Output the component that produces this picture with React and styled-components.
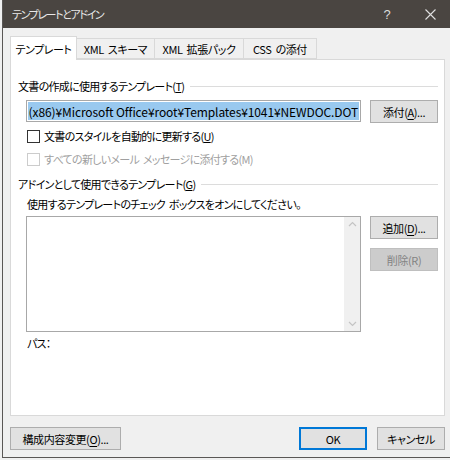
import React from "react";
import styled, { createGlobalStyle } from "styled-components";

const GlobalStyle = createGlobalStyle`
  html, body {
    margin: 0;
    padding: 0;
    background: #f0f0f0;
  }
  body {
    font-family: "Noto Sans CJK JP", "Noto Sans", sans-serif;
    font-size: 11px;
    letter-spacing: -0.7px;
    word-spacing: 2px;
    font-feature-settings: "palt";
    color: #000;
  }
`;

const Window = styled.div`
  margin-left: 2px;
  width: 448px;
  height: 458px;
  border-left: 1px solid #5a5755;
  border-bottom: 1px solid #5a5755;
  background: #f0f0f0;
  display: flex;
  flex-direction: column;
  box-sizing: border-box;
`;

const TitleBar = styled.div`
  height: 28px;
  flex-shrink: 0;
  background: #4a4541;
  color: #e8e8e8;
  display: flex;
  align-items: center;
  padding-left: 9px;
`;

const TitleText = styled.div`
  flex: 1;
  letter-spacing: -1.4px;
`;

const TitleIcon = styled.div`
  width: ${(p) => p.$w}px;
  display: flex;
  justify-content: center;
  align-items: center;
  font-size: 13px;
  letter-spacing: 0;
  color: #dcdcdc;
  font-family: "Liberation Sans", sans-serif;
`;

const Body = styled.div`
  flex: 1;
  display: flex;
  flex-direction: column;
  padding: 8px 5px 0 7px;
`;

const TabList = styled.div`
  display: flex;
  align-items: flex-end;
  height: 23px;
  position: relative;
  z-index: 1;
`;

const Tab = styled.div`
  width: ${(p) => p.$w}px;
  height: ${(p) => (p.$active ? "24px" : "21px")};
  box-sizing: border-box;
  margin-bottom: ${(p) => (p.$active ? "-1px" : "0")};
  background: ${(p) => (p.$active ? "#fff" : "#f0f0f0")};
  border: 1px solid #d9d9d9;
  border-bottom: ${(p) => (p.$active ? "none" : "1px solid #d9d9d9")};
  border-left: ${(p) => (p.$first || p.$active ? "1px solid #d9d9d9" : "none")};
  display: flex;
  align-items: center;
  justify-content: center;
  white-space: nowrap;
  letter-spacing: -0.4px;
`;

const Panel = styled.div`
  height: 357px;
  box-sizing: border-box;
  background: #fff;
  border: 1px solid #d9d9d9;
  padding: 18px 6px 0 7px;
  display: flex;
  flex-direction: column;
`;

const GroupHeader = styled.div`
  display: flex;
  align-items: center;
  gap: 6px;
  height: 16px;
  margin-top: ${(p) => p.$mt || 0}px;
  white-space: nowrap;
  &::after {
    content: "";
    flex: 1;
    height: 1px;
    background: #dcdcdc;
  }
`;

const Row = styled.div`
  display: flex;
  gap: 9px;
  margin-left: 8px;
  margin-top: ${(p) => p.$mt || 0}px;
  align-items: flex-start;
`;

const TextField = styled.div`
  width: 335px;
  height: 22px;
  box-sizing: border-box;
  border: 1px solid #a8a8a8;
  padding: 1px;
  display: flex;
  overflow: hidden;
`;

const Selection = styled.div`
  flex: 1;
  background: #99c9ef;
  display: flex;
  align-items: center;
  justify-content: flex-end;
  padding-right: 1px;
  white-space: nowrap;
  overflow: hidden;
  font-size: 12px;
  letter-spacing: -0.1px;
  word-spacing: 0;
`;

const Button = styled.button`
  width: ${(p) => p.$w || 68}px;
  height: 23px;
  box-sizing: border-box;
  font: inherit;
  letter-spacing: -0.4px;
  font-feature-settings: "palt";
  padding: 0;
  background: ${(p) => (p.disabled ? "#cccccc" : "#e1e1e1")};
  color: ${(p) => (p.disabled ? "#838383" : "#000")};
  border: ${(p) => (p.$default ? "2px solid #0078d7" : p.disabled ? "1px solid #bfbfbf" : "1px solid #adadad")};
  display: flex;
  align-items: center;
  justify-content: center;
  u {
    text-underline-offset: 2px;
  }
`;

const CheckRow = styled.label`
  display: flex;
  align-items: center;
  gap: 4px;
  height: 16px;
  margin-left: 9px;
  margin-top: ${(p) => p.$mt || 0}px;
  color: ${(p) => (p.$disabled ? "#a0a0a0" : "#000")};
  white-space: nowrap;
`;

const Box = styled.span`
  width: 13px;
  height: 13px;
  box-sizing: border-box;
  border: 1px solid ${(p) => (p.$disabled ? "#cccccc" : "#333")};
  background: #fff;
  flex-shrink: 0;
`;

const Note = styled.div`
  margin-left: 9px;
  margin-top: ${(p) => p.$mt || 0}px;
  height: 16px;
  display: flex;
  align-items: center;
  white-space: pre;
`;

const ListBox = styled.div`
  width: 335px;
  height: 116px;
  box-sizing: border-box;
  border: 1px solid #a8a8a8;
  display: flex;
  justify-content: flex-end;
`;

const ScrollBar = styled.div`
  width: 16px;
  background: #f0f0f0;
  display: flex;
  flex-direction: column;
  justify-content: space-between;
  align-items: center;
  padding: 4px 0;
`;

const ButtonColumn = styled.div`
  display: flex;
  flex-direction: column;
  gap: 9px;
`;

const Footer = styled.div`
  display: flex;
  align-items: center;
  margin-top: 11px;
  gap: 10px;
`;

const Spacer = styled.div`
  flex: 1;
`;

const Chevron = ({ up }) => (
  <svg width="9" height="6" viewBox="0 0 9 6">
    <polyline
      points={up ? "1,5 4.5,1.5 8,5" : "1,1 4.5,4.5 8,1"}
      fill="none"
      stroke="#c4c4c4"
      strokeWidth="1.2"
    />
  </svg>
);

export default function App() {
  return (
    <>
      <GlobalStyle />
      <Window>
        <TitleBar>
          <TitleText>テンプレートとアドイン</TitleText>
          <TitleIcon $w={46}>?</TitleIcon>
          <TitleIcon $w={40}>
            <svg width="11" height="11" viewBox="0 0 11 11">
              <path d="M0.5 0.5 L10.5 10.5 M10.5 0.5 L0.5 10.5" stroke="#e0e0e0" strokeWidth="1.1" />
            </svg>
          </TitleIcon>
        </TitleBar>
        <Body>
          <TabList>
            <Tab $active $first $w={67}>テンプレート</Tab>
            <Tab $w={78}>XML スキーマ</Tab>
            <Tab $w={89}>XML 拡張パック</Tab>
            <Tab $w={73}>CSS の添付</Tab>
          </TabList>
          <Panel>
            <GroupHeader>
              <span>
                文書の作成に使用するテンプレート(<u>T</u>)
              </span>
            </GroupHeader>
            <Row $mt={6}>
              <TextField>
                <Selection>(x86)¥Microsoft Office¥root¥Templates¥1041¥NEWDOC.DOT</Selection>
              </TextField>
              <Button>
                添付(<u>A</u>)...
              </Button>
            </Row>
            <CheckRow $mt={5}>
              <Box />
              <span>
                文書のスタイルを自動的に更新する(<u>U</u>)
              </span>
            </CheckRow>
            <CheckRow $mt={7} $disabled>
              <Box $disabled />
              <span>すべての新しいメール メッセージに添付する(M)</span>
            </CheckRow>
            <GroupHeader $mt={9}>
              <span>
                アドインとして使用できるテンプレート(<u>G</u>)
              </span>
            </GroupHeader>
            <Note $mt={4}>使用するテンプレートのチェック ボックスをオンにしてください。</Note>
            <Row $mt={4}>
              <ListBox>
                <ScrollBar>
                  <Chevron up />
                  <Chevron />
                </ScrollBar>
              </ListBox>
              <ButtonColumn>
                <Button>
                  追加(<u>D</u>)...
                </Button>
                <Button disabled>削除(R)</Button>
              </ButtonColumn>
            </Row>
            <Note $mt={3}>パス：</Note>
          </Panel>
          <Footer>
            <Button $w={111}>
              構成内容変更(<u>O</u>)...
            </Button>
            <Spacer />
            <Button $w={68} $default>
              OK
            </Button>
            <Button $w={68}>キャンセル</Button>
          </Footer>
        </Body>
      </Window>
    </>
  );
}
